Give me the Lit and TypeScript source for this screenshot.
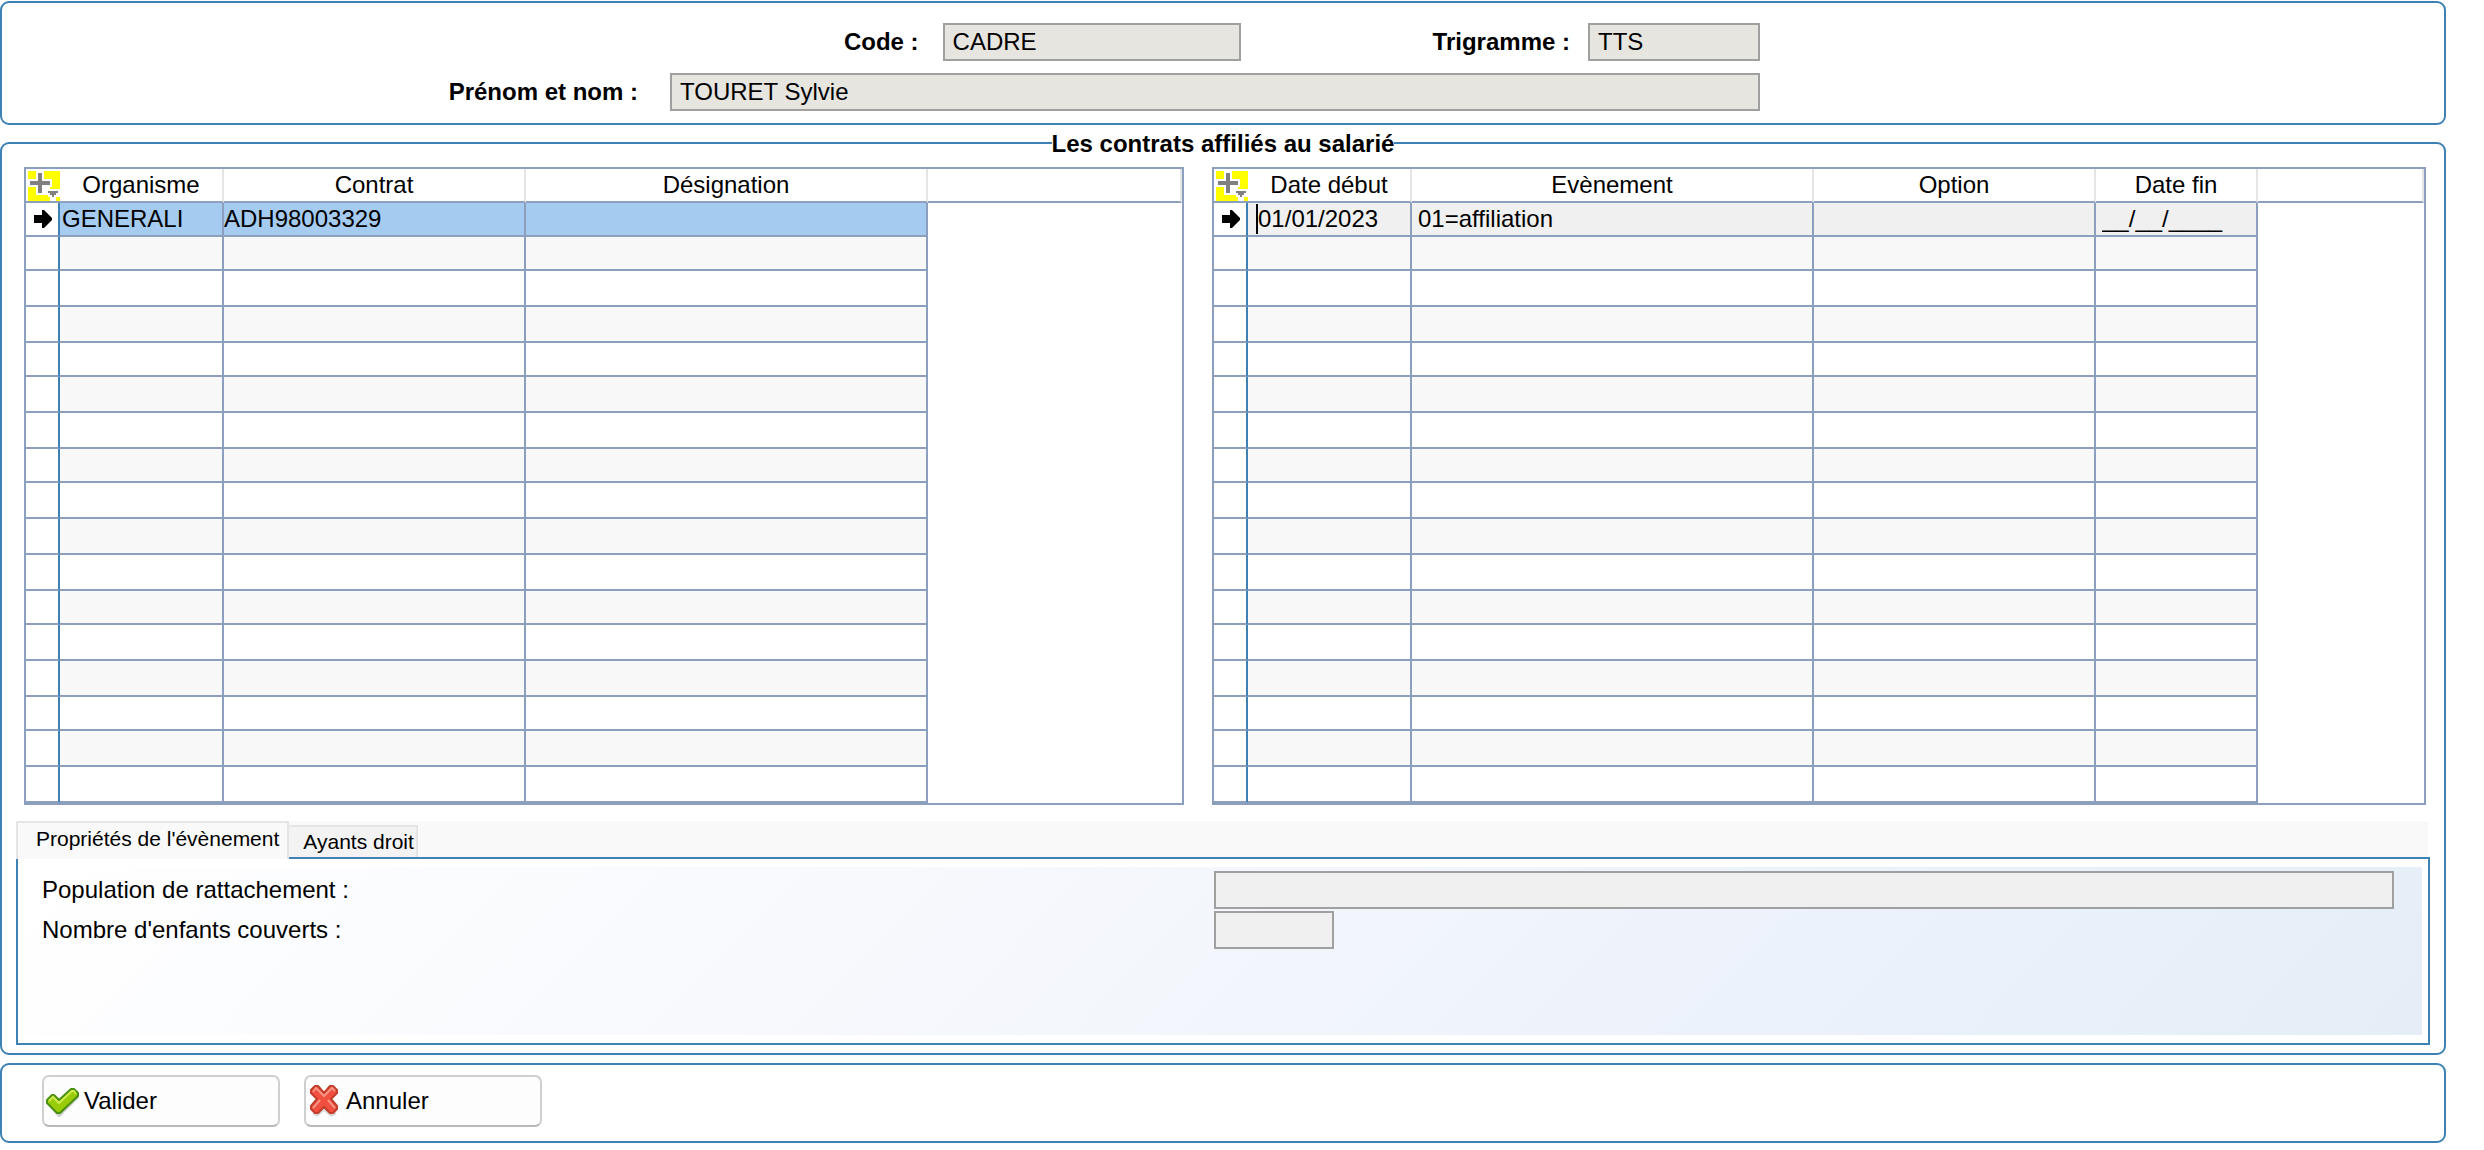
import { LitElement, html, css } from "lit";
import { customElement, property } from "lit/decorators.js";
import { classMap } from "lit/directives/class-map.js";
import { styleMap } from "lit/directives/style-map.js";

interface Column {
  label: string;
  width: number;
}

const CONTRACT_COLUMNS: Column[] = [
  { label: "Organisme", width: 164 },
  { label: "Contrat", width: 302 },
  { label: "Désignation", width: 402 },
];

const EVENT_COLUMNS: Column[] = [
  { label: "Date début", width: 164 },
  { label: "Evènement", width: 402 },
  { label: "Option", width: 282 },
  { label: "Date fin", width: 162 },
];

const ROW_COUNT = 17;
const SHORT_ROWS = new Set([0, 1, 4, 7, 11, 14]);

@customElement("data-grid")
export class DataGrid extends LitElement {
  @property({ type: String }) caption = "";
  @property({ attribute: false }) columns: Column[] = [];
  @property({ attribute: false }) values: string[] = [];
  @property({ type: Boolean }) editing = false;

  static styles = css`
    :host {
      display: block;
      box-sizing: border-box;
      min-width: 0;
      border: 2px solid #8c9fbd;
    }
    table {
      width: 100%;
      table-layout: fixed;
      border-collapse: separate;
      border-spacing: 0;
      line-height: 28px;
    }
    th,
    td {
      box-sizing: border-box;
      padding: 0;
      overflow: hidden;
      white-space: nowrap;
      font-weight: normal;
    }
    th {
      height: 34px;
      border-right: 2px solid #e5e5e5;
      border-bottom: 2px solid #8c9fbd;
    }
    th.mark {
      border-right: 0;
      padding: 2px 0 0 2px;
      vertical-align: top;
    }
    .mark-col {
      width: 34px;
    }
    .add {
      display: block;
      width: 32px;
      height: 30px;
      padding: 0;
      border: 0;
      background: #ffff00;
    }
    svg {
      display: block;
    }
    td {
      height: 36px;
      border-right: 2px solid #8c9fbd;
      border-bottom: 2px solid #8c9fbd;
    }
    tr.short td {
      height: 34px;
    }
    tr:nth-child(even) td {
      background: #f8f8f8;
    }
    tr.selected td {
      background: #a6cbf0;
    }
    tr.editing td {
      background: #f0f0f0;
    }
    tbody tr td.mark {
      background: #ffffff;
      border-right: 2px solid #3d81b5;
    }
    tbody tr td.rest {
      background: #ffffff;
      border: 0;
    }
    .mark + td {
      padding-left: 2px;
    }
    .editing .mark + td {
      padding-left: 0;
    }
    .arrow {
      margin-left: 8px;
    }
    input {
      display: block;
      box-sizing: border-box;
      width: 100%;
      height: 30px;
      padding: 0 0 0 6px;
      border: 0;
      outline: 0;
      background: transparent;
      font: inherit;
      color: inherit;
    }
    .caret {
      display: block;
      margin-left: 8px;
      border-left: 2px solid #000000;
    }
    .caret input {
      padding: 0;
    }
  `;

  private cell(value: string, index: number) {
    if (!this.editing) return html`<td>${value}</td>`;
    return html`<td>
      <span class=${classMap({ caret: index === 0 })}>
        <input aria-label=${this.columns[index].label} .value=${value} readonly />
      </span>
    </td>`;
  }

  render() {
    return html`
      <table aria-label=${this.caption}>
        <colgroup>
          <col class="mark-col" />
          ${this.columns.map((c) => html`<col style=${styleMap({ width: `${c.width}px` })} />`)}
          <col />
        </colgroup>
        <thead>
          <tr>
            <th class="mark">
              <button class="add" aria-label="Options de la table">
                <svg width="32" height="30" viewBox="0 0 32 30">
                  <path d="M8 0h8v8h8v8h-2v2h10v8h-4v4h-6v-4h-2v-2H8v-8H0V8h8z" fill="#fff" />
                  <path d="M10 2h4v8h8v4h-8v8h-4v-8H2v-4h8z" fill="#808080" />
                  <path d="M20 20h10v2h-2v2h-2v2h-2v-2h-2v-2h-2z" fill="#808080" />
                </svg>
              </button>
            </th>
            ${this.columns.map((c) => html`<th scope="col">${c.label}</th>`)}
            <th class="rest"></th>
          </tr>
        </thead>
        <tbody>
          ${Array.from({ length: ROW_COUNT }, (_, row) => {
            const first = row === 0;
            return html`<tr
              class=${classMap({
                short: SHORT_ROWS.has(row),
                selected: first && !this.editing,
                editing: first && this.editing,
              })}
            >
              <td class="mark">
                ${first
                  ? html`<svg class="arrow" width="18" height="18" viewBox="0 0 18 18">
                      <path d="M0 5h8V0h2l8 8v2l-8 8H8v-5H0z" fill="#000" />
                    </svg>`
                  : ""}
              </td>
              ${this.columns.map((_c, i) =>
                first ? this.cell(this.values[i] ?? "", i) : html`<td></td>`
              )}
              <td class="rest"></td>
            </tr>`;
          })}
        </tbody>
      </table>
    `;
  }
}

@customElement("app-root")
export class AppRoot extends LitElement {
  static styles = css`
    :host {
      display: block;
      box-sizing: border-box;
      padding: 1px 38px 7px 0;
      background: #ffffff;
      color: #000000;
      font: 24px/28px "Liberation Sans", Arial, sans-serif;
    }
    .panel {
      box-sizing: border-box;
      border: 2px solid #3d81b5;
      border-radius: 9px;
    }
    .identity {
      display: flex;
      flex-direction: column;
      gap: 12px;
      padding: 20px 684px 12px 0;
    }
    .line {
      display: flex;
      justify-content: flex-end;
      align-items: center;
    }
    label {
      white-space: nowrap;
    }
    .identity label {
      font-weight: bold;
    }
    .field {
      box-sizing: border-box;
      height: 38px;
      padding: 0 8px;
      border: 2px solid #a0a0a0;
      border-radius: 0;
      outline: 0;
      background: #e6e5e0;
      color: inherit;
      font: inherit;
    }
    .code {
      width: 298px;
      margin: 0 192px 0 24px;
    }
    .trigram {
      width: 172px;
      margin-left: 18px;
    }
    .name {
      width: 1090px;
      margin-left: 32px;
    }
    .contracts {
      min-width: 0;
      margin: 3px 0 0;
      padding: 9px 14px 8px;
    }
    legend {
      margin: 0 auto;
      padding: 2px 0 0;
      font-weight: bold;
    }
    .grids {
      display: grid;
      grid-template-columns: minmax(0, 1161fr) minmax(0, 1215fr);
      gap: 28px;
      padding: 0 4px 0 8px;
    }
    .tabs {
      display: flex;
      align-items: flex-end;
      height: 36px;
      margin: 16px 2px 0 0;
      background: #f9f9f9;
      font-size: 21px;
    }
    .tab {
      box-sizing: border-box;
      height: 32px;
      padding: 0 2px 0 14px;
      border: 2px solid #e5e5e5;
      border-bottom: 0;
      border-left: 0;
      background: #f3f3f3;
      color: inherit;
      font: inherit;
      white-space: nowrap;
    }
    .tab.active {
      position: relative;
      height: 38px;
      margin-bottom: -2px;
      padding: 0 8px 4px 18px;
      border-left: 2px solid #e5e5e5;
      background: #f9f9f9;
    }
    .tabpanel {
      box-sizing: border-box;
      height: 188px;
      padding: 8px 6px;
      border: 2px solid #3d81b5;
    }
    .props {
      display: grid;
      grid-template-columns: 1172px 1fr;
      grid-auto-rows: 38px;
      gap: 2px 0;
      align-items: center;
      box-sizing: border-box;
      height: 100%;
      padding: 4px 28px 0 18px;
      background: linear-gradient(135deg, #ffffff, #f3f6fc 50%, #e8f0fa 85%, #e5edf7);
    }
    .props .field {
      background: #f0f0f0;
    }
    .children {
      width: 120px;
    }
    .actions {
      display: flex;
      gap: 24px;
      margin-top: 8px;
      padding: 10px 40px 14px;
    }
    .action {
      display: flex;
      align-items: center;
      gap: 4px;
      box-sizing: border-box;
      width: 238px;
      height: 52px;
      padding: 0 2px;
      border: 2px solid #cfcfcf;
      border-bottom-color: #b9b9b9;
      border-radius: 7px;
      background: #fdfdfd;
      color: inherit;
      font: inherit;
    }
  `;

  render() {
    return html`
      <section class="panel identity">
        <div class="line">
          <label for="code">Code :</label>
          <input id="code" class="field code" value="CADRE" readonly />
          <label for="trigram">Trigramme :</label>
          <input id="trigram" class="field trigram" value="TTS" readonly />
        </div>
        <div class="line">
          <label for="name">Prénom et nom :</label>
          <input id="name" class="field name" value="TOURET Sylvie" readonly />
        </div>
      </section>

      <fieldset class="panel contracts">
        <legend>Les contrats affiliés au salarié</legend>
        <div class="grids">
          <data-grid
            caption="Contrats"
            .columns=${CONTRACT_COLUMNS}
            .values=${["GENERALI", "ADH98003329", ""]}
          ></data-grid>
          <data-grid
            caption="Evènements"
            editing
            .columns=${EVENT_COLUMNS}
            .values=${["01/01/2023", "01=affiliation", "", "__/__/____"]}
          ></data-grid>
        </div>
        <div class="tabs" role="tablist">
          <button class="tab active" role="tab" aria-selected="true">Propriétés de l'évènement</button>
          <button class="tab" role="tab" aria-selected="false">Ayants droit</button>
        </div>
        <div class="tabpanel" role="tabpanel">
          <div class="props">
            <label for="population">Population de rattachement :</label>
            <input id="population" class="field" readonly />
            <label for="children">Nombre d'enfants couverts :</label>
            <input id="children" class="field children" readonly />
          </div>
        </div>
      </fieldset>

      <section class="panel actions">
        <button class="action">
          <svg width="34" height="32" viewBox="0 0 34 32">
            <path d="M3 18l10 12L32 11" fill="none" stroke="#000" stroke-opacity=".18" stroke-width="4" />
            <path d="M1 15l5-5h2l5 5L25 4h3l4 4v3L14 28h-3L1 18z" fill="#98cc08" stroke="#4c9010" stroke-width="2" stroke-linejoin="round" />
            <path d="M3 16l4-4 6 6L26 6h2l2 3" fill="none" stroke="#cdea50" stroke-width="2" />
          </svg>
          Valider
        </button>
        <button class="action">
          <svg width="34" height="32" viewBox="0 0 34 32">
            <path d="M5 28l4 2 7-6 7 6 5-2" fill="none" stroke="#000" stroke-opacity=".15" stroke-width="3" />
            <path d="M3 5l4-4h3l6 7 6-7h3l4 4v3l-6 6 6 7v3l-4 4h-3l-6-6-6 6H7l-4-4v-3l6-7-6-6z" fill="#f05040" stroke="#c43c2c" stroke-width="2" stroke-linejoin="round" />
            <path d="M5 7l3-4 8 8 8-8 3 3M5 23l7-8M27 23l-7-8" fill="none" stroke="#fa9484" stroke-width="2" />
          </svg>
          Annuler
        </button>
      </section>
    `;
  }
}
